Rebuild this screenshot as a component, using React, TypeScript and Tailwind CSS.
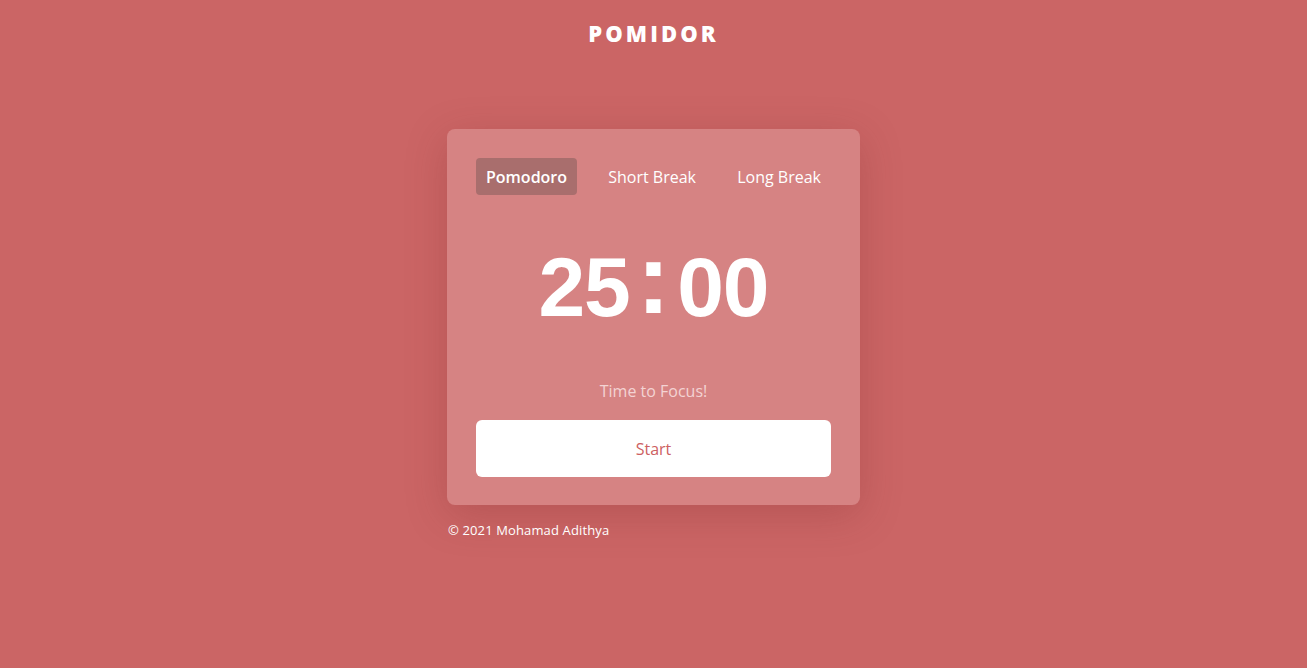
import { useState } from "react";

const tabs = ["Pomodoro", "Short Break", "Long Break"];

export default function App() {
  const [active, setActive] = useState(0);

  return (
    <div
      className="min-h-screen w-full bg-[#cb6565] text-white"
      style={{ fontFamily: '"Open Sans", "Noto Sans", sans-serif' }}
    >
      <div className="mx-auto w-[413px]">
        <header className="flex h-[66px] items-center justify-center">
          <h1 className="text-[22px] font-extrabold tracking-[0.14em]">POMIDOR</h1>
        </header>

        <main className="mt-[63px] rounded-lg bg-[#d68383] px-[29px] pt-[29px] pb-[28px] shadow-[0_10px_40px_rgba(120,40,40,0.25)]">
          <div className="flex items-center justify-between">
            {tabs.map((t, i) => (
              <button
                key={t}
                onClick={() => setActive(i)}
                className={
                  "h-[37px] rounded px-[10px] text-[16px] " +
                  (active === i ? "bg-[#a96e6d] font-semibold" : "font-normal")
                }
              >
                {t}
              </button>
            ))}
          </div>

          <div className="mt-[26px] flex h-[120px] items-center justify-center">
            <div
              className="flex items-baseline gap-[7px] font-bold leading-none"
              style={{ fontFamily: '"Liberation Sans", Arial, sans-serif' }}
            >
              <span className="text-[84px] tracking-[-1px]">25</span>
              <span className="-translate-y-[3px] text-[100px]">:</span>
              <span className="text-[84px] tracking-[-1px]">00</span>
            </div>
          </div>

          <p className="mt-[38px] text-center text-[16px] leading-6 text-[#f3d3d3]">Time to Focus!</p>

          <button className="mt-[17px] h-[57px] w-full rounded-md bg-white text-[16px] text-[#cd5f63]">
            Start
          </button>
        </main>

        <footer className="mt-[16px] pl-px text-[13px] leading-[18px] tracking-[0.01em]">© 2021 Mohamad Adithya</footer>
      </div>
    </div>
  );
}
